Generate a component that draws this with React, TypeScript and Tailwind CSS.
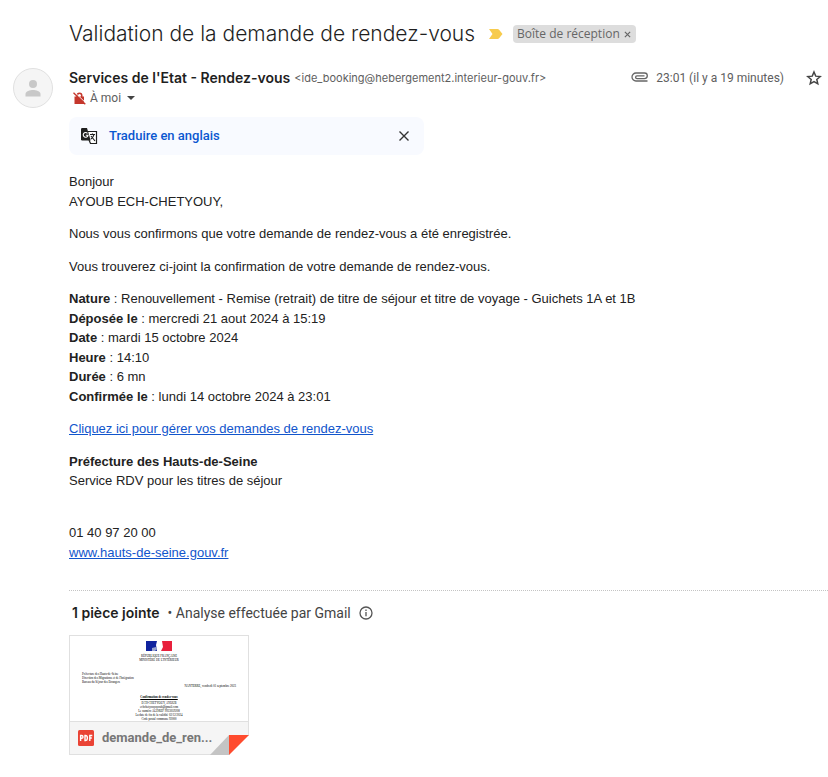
import type { ReactNode } from "react";

const details = [
  ["Nature", "Renouvellement - Remise (retrait) de titre de séjour et titre de voyage - Guichets 1A et 1B"],
  ["Déposée le", "mercredi 21 aout 2024 à 15:19"],
  ["Date", "mardi 15 octobre 2024"],
  ["Heure", "14:10"],
  ["Durée", "6 mn"],
  ["Confirmée le", "lundi 14 octobre 2024 à 23:01"],
];

function MailLink({ children }: { children: ReactNode }) {
  return (
    <a href="#" className="text-[#1155cc] underline">
      {children}
    </a>
  );
}

function Subject() {
  return (
    <header className="flex h-7 items-center pl-[69px]">
      <h1 className="font-['Inter',sans-serif] text-[21px] leading-7 font-light text-[#1f1f1f]">
        Validation de la demande de rendez-vous
      </h1>
      <svg className="ml-3.5 shrink-0" width="14" height="10" viewBox="0 0 14 10" aria-hidden="true">
        <path d="M0 0h8.500q1 0 1.600.8L13.500 5 10.100 9.200q-.600.8-1.600.8H0l3.500-5z" fill="#f7cb4d" />
      </svg>
      <span className="ml-2.5 flex h-[18px] items-center rounded bg-[#ddd] pl-1 font-['Open_Sans',sans-serif] text-xs text-[#666]">
        Boîte de réception
        <button type="button" aria-label="Retirer le libellé" className="flex h-[18px] w-4 items-center justify-center">
          <svg width="7" height="7" viewBox="0 0 8 8" stroke="#666" strokeWidth="1.400">
            <path d="M1 1l6 6M7 1L1 7" />
          </svg>
        </button>
      </span>
    </header>
  );
}

function Sender() {
  return (
    <div className="mt-5 flex items-start pl-[13px]">
      <svg className="shrink-0" width="40" height="40" viewBox="0 0 40 40" aria-hidden="true">
        <circle cx="20" cy="20" r="19.500" fill="#f5f5f5" stroke="#e0e0e0" />
        <circle cx="20" cy="16" r="4" fill="#c8c8c8" />
        <path d="M12.500 28.500v-2.500c0-2.800 4.500-4 7.500-4s7.500 1.200 7.500 4v2.500z" fill="#c8c8c8" />
      </svg>
      <div className="ml-4 min-w-0 grow">
        <div className="flex h-5 items-center text-xs text-[#5e5e5e]">
          <strong className="font-['Inter',sans-serif] text-sm font-semibold text-[#1f1f1f]">
            Services de l'Etat - Rendez-vous
          </strong>
          <span className="ml-1 font-['Inter',sans-serif] text-[11px]">
            &lt;ide_booking@hebergement2.interieur-gouv.fr&gt;
          </span>
          <svg className="ml-auto mb-[3px] shrink-0" width="17" height="10" viewBox="0 0 17 10" fill="none" stroke="#666" strokeWidth="1.300" aria-hidden="true">
            <path d="M16.500 9H5a4 4 0 010-8h8.500a2.700 2.700 0 010 5.600H6a1.400 1.400 0 010-2.800h7.500" />
          </svg>
          <time className="ml-2 whitespace-nowrap">23:01 (il y a 19 minutes)</time>
          <button type="button" aria-label="Suivre" className="ml-5.5 mr-1.5 shrink-0">
            <svg width="16" height="16" viewBox="0 0 24 24" fill="none" stroke="#444" strokeWidth="2.200">
              <path d="M12 3l2.600 6.200 6.700.6-5.100 4.400 1.500 6.500-5.700-3.400-5.700 3.400 1.500-6.500-5.100-4.400 6.700-.6z" />
            </svg>
          </button>
        </div>
        <div className="flex h-5 items-center pl-1">
          <svg width="13" height="13" viewBox="0 0 13 13" aria-hidden="true">
            <path d="M3.500 4.500V3.400a3 3 0 016 0v1.100H11V12H1.500V4.500z" fill="#c5372c" />
            <path d="M5 4.500V3.400a1.500 1.500 0 013 0v1.100z" fill="#fff" />
            <path d="M1.500.2L12.800 11" stroke="#fff" />
            <path d="M.5.8L12.300 12.300" stroke="#c5372c" strokeWidth="1.300" />
          </svg>
          <button type="button" className="ml-1 flex items-center text-xs text-[#5e5e5e]">
            À moi
            <svg className="ml-1.5" width="8" height="4" viewBox="0 0 8 4" aria-hidden="true">
              <path d="M0 0h8L4 4z" fill="#444" />
            </svg>
          </button>
        </div>
      </div>
    </div>
  );
}

function TranslateBar() {
  return (
    <div className="mt-[9px] ml-[69px] flex h-[38px] max-w-[355px] items-center rounded-lg bg-[#f8faff] px-3">
      <svg width="17" height="16" viewBox="0 0 17 16" aria-hidden="true">
        <path d="M7 3.500h8.500v12H9.500L8 12" fill="#fff" stroke="#1f1f1f" strokeWidth="1.200" />
        <path d="M1.200 0H6l3.700 12.500H1.200Q0 12.500 0 11.300V1.200Q0 0 1.200 0z" fill="#1f1f1f" />
        <path d="M6.500 5.300A2.400 2.400 0 107 7.300H4.800" fill="none" stroke="#fff" strokeWidth="1.100" />
        <path d="M9 6.500h5M11.500 5.500v1M13 6.500q-.5 2.500-3 4.500M10 8l4 5" fill="none" stroke="#1f1f1f" strokeWidth="1.200" />
      </svg>
      <button type="button" className="ml-[11px] text-[13px] font-medium text-[#0b57d0]">
        Traduire en anglais
      </button>
      <button type="button" aria-label="Fermer" className="ml-auto flex size-4 items-center justify-center">
        <svg width="10" height="10" viewBox="0 0 10 10" stroke="#333" strokeWidth="1.400">
          <path d="M.5.5l9 9M9.500.5l-9 9" />
        </svg>
      </button>
    </div>
  );
}

function Message() {
  return (
    <div className="mt-[17px] ml-[69px] flex flex-col gap-[13px] font-['Liberation_Sans',Arial,sans-serif] text-[13px] leading-normal text-[#222]">
      <p>
        Bonjour
        <br />
        AYOUB ECH-CHETYOUY,
      </p>
      <p>Nous vous confirmons que votre demande de rendez-vous a été enregistrée.</p>
      <p>Vous trouverez ci-joint la confirmation de votre demande de rendez-vous.</p>
      <div>
        {details.map(([label, value]) => (
          <p key={label}>
            <b>{label}</b> : {value}
          </p>
        ))}
      </div>
      <p>
        <MailLink>Cliquez ici pour gérer vos demandes de rendez-vous</MailLink>
      </p>
      <p>
        <b>Préfecture des Hauts-de-Seine</b>
        <br />
        Service RDV pour les titres de séjour
        <br />
        <br />
      </p>
      <p>
        01 40 97 20 00
        <br />
        <MailLink>www.hauts-de-seine.gouv.fr</MailLink>
      </p>
    </div>
  );
}

function Flag() {
  return (
    <svg className="mx-auto" width="26" height="10" viewBox="0 0 26 10" aria-hidden="true">
      <path d="M0 0h11l-1 4 1 6H0z" fill="#10239e" />
      <path d="M16 0h10v10H15l2-4z" fill="#e8203c" />
      <path d="M6 7l4-1 1 2-2 2H6z" fill="#98a3cf" />
    </svg>
  );
}

function Attachments() {
  return (
    <section className="mt-7 ml-[69px] border-t border-dotted border-[#c4c4c4] pt-3">
      <h2 className="flex h-5 items-center pl-[3px] text-sm text-[#444]">
        <span className="font-['Inter',sans-serif] font-semibold text-[#1f1f1f]">1 pièce jointe</span>
        <span className="ml-2">• Analyse effectuée par Gmail</span>
        <svg className="ml-2" width="14" height="14" viewBox="0 0 14 14" fill="none" stroke="#555" strokeWidth="1.300" aria-hidden="true">
          <circle cx="7" cy="7" r="6" />
          <path d="M7 6v4.200M7 3.600v1.300" />
        </svg>
      </h2>
      <a href="#" className="relative mt-3 flex h-[120px] w-[180px] flex-col border border-[#e0e0e0] bg-white">
        <div className="h-[85px] pt-[5px] font-['Liberation_Serif',serif] text-[3px] leading-1 text-black">
          <Flag />
          <p className="mt-[3px] text-center">RÉPUBLIQUE FRANÇAISE</p>
          <p className="text-center">MINISTÈRE DE L'INTÉRIEUR</p>
          <div className="mt-2.5 pl-3">
            <p>Préfecture des Hauts-de-Seine</p>
            <p>Direction des Migrations et de l'Intégration</p>
            <p>Bureau du Séjour des Etrangers</p>
          </div>
          <p className="pr-3 text-right">NANTERRE, vendredi 01 septembre 2023</p>
          <p className="mt-[7px] text-center font-bold underline">Confirmation de rendez-vous</p>
          <div className="mt-[2px] text-center">
            <p>ECH-CHETYOUY, AYOUB</p>
            <p>echchetyouyayoub@gmail.com</p>
            <p>Le numéro AGDREF 9923059208</p>
            <p>La date de fin de la validité 02/12/2024</p>
            <p>Code postal commune 92000</p>
          </div>
        </div>
        <div className="flex h-[33px] items-center border-t border-[#e0e0e0] bg-[#f5f5f5] pl-2">
          <svg width="16" height="16" viewBox="0 0 16 16" aria-hidden="true">
            <rect width="16" height="16" rx="1.500" fill="#ea4335" />
            <path d="M2.600 11V5.500h1a1.300 1.300 0 010 2.800h-1M7 5.500v5h.6a1.700 1.700 0 001.700-1.700V7.200a1.700 1.700 0 00-1.700-1.700zM11.800 11V5.500h2.500M11.800 8h2" fill="none" stroke="#fff" strokeWidth="1.400" />
          </svg>
          <span className="ml-2 text-[13px] font-bold text-[#777]">demande_de_ren...</span>
        </div>
        <svg className="absolute -right-px -bottom-px" width="39" height="20" viewBox="0 0 39 20" aria-hidden="true">
          <path d="M39 0v20H19z" fill="#fff" />
          <path d="M19 0v20H0z" fill="#c4c4c4" />
          <path d="M19 0h20L19 20z" fill="#ff4b2e" />
        </svg>
      </a>
    </section>
  );
}

export default function App() {
  return (
    <main className="min-h-screen bg-white pt-5 pb-5 font-['Google_Sans',Roboto,sans-serif]">
      <Subject />
      <Sender />
      <TranslateBar />
      <Message />
      <Attachments />
    </main>
  );
}
